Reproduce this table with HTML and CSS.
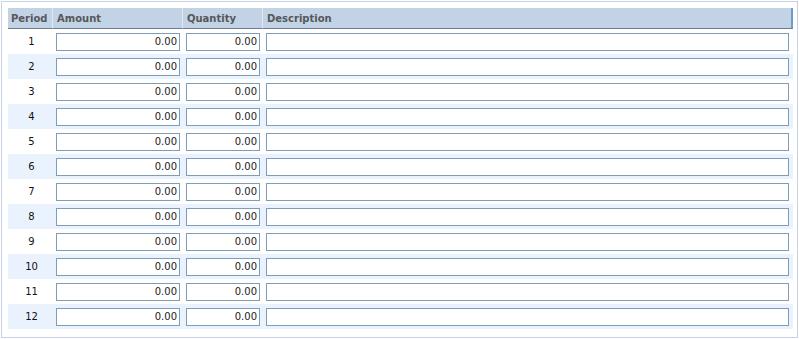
FILE: index.html
```html
<!DOCTYPE html>
<html>
<head>
<meta charset="utf-8">
<link rel="stylesheet" href="styles.css">
</head>
<body>
<div class="panel">
<table class="grid">
<colgroup><col class="c-period"><col class="c-amount"><col class="c-qty"><col></colgroup>
<thead>
<tr><th class="h-period">Period</th><th>Amount</th><th>Quantity</th><th class="h-last">Description</th></tr>
</thead>
<tbody>
<tr><td class="num">1</td><td><input class="in right" value="0.00"></td><td><input class="in right" value="0.00"></td><td><input class="in"></td></tr>
<tr class="alt"><td class="num">2</td><td><input class="in right" value="0.00"></td><td><input class="in right" value="0.00"></td><td><input class="in"></td></tr>
<tr><td class="num">3</td><td><input class="in right" value="0.00"></td><td><input class="in right" value="0.00"></td><td><input class="in"></td></tr>
<tr class="alt"><td class="num">4</td><td><input class="in right" value="0.00"></td><td><input class="in right" value="0.00"></td><td><input class="in"></td></tr>
<tr><td class="num">5</td><td><input class="in right" value="0.00"></td><td><input class="in right" value="0.00"></td><td><input class="in"></td></tr>
<tr class="alt"><td class="num">6</td><td><input class="in right" value="0.00"></td><td><input class="in right" value="0.00"></td><td><input class="in"></td></tr>
<tr><td class="num">7</td><td><input class="in right" value="0.00"></td><td><input class="in right" value="0.00"></td><td><input class="in"></td></tr>
<tr class="alt"><td class="num">8</td><td><input class="in right" value="0.00"></td><td><input class="in right" value="0.00"></td><td><input class="in"></td></tr>
<tr><td class="num">9</td><td><input class="in right" value="0.00"></td><td><input class="in right" value="0.00"></td><td><input class="in"></td></tr>
<tr class="alt"><td class="num">10</td><td><input class="in right" value="0.00"></td><td><input class="in right" value="0.00"></td><td><input class="in"></td></tr>
<tr><td class="num">11</td><td><input class="in right" value="0.00"></td><td><input class="in right" value="0.00"></td><td><input class="in"></td></tr>
<tr class="alt"><td class="num">12</td><td><input class="in right" value="0.00"></td><td><input class="in right" value="0.00"></td><td><input class="in"></td></tr>
</tbody>
</table>
</div>
</body>
</html>
```
FILE: styles.css
```css
html, body {
  margin: 0;
  padding: 0;
  background: #ffffff;
}
body {
  font-family: "DejaVu Sans", Verdana, sans-serif;
  font-size: 10px;
}
.panel {
  margin: 1px;
  width: 797px;
  height: 337px;
  box-sizing: border-box;
  border: 1px solid #c6d3e3;
  padding: 6px 4px 7px 6px;
}
.grid {
  border-collapse: separate;
  border-spacing: 0;
  width: 785px;
  table-layout: fixed;
}
.c-period { width: 45px; }
.c-amount { width: 130px; }
.c-qty { width: 80px; }
.grid th {
  height: 21px;
  padding: 0 0 0 4px;
  box-sizing: border-box;
  background: #c2d3e5;
  color: #55585c;
  font-weight: bold;
  font-size: 10px;
  text-align: left;
  border-bottom: 1px solid #6f7c8c;
  border-right: 1px solid #dfe8f2;
  vertical-align: middle;
  white-space: nowrap;
}
.grid th.h-period { padding-left: 3px; }
.grid th.h-last { border-right: 2px solid #6d9bd4; }
.grid td {
  height: 25px;
  padding: 0 3px;
  box-sizing: border-box;
  vertical-align: middle;
}
.grid td.num {
  text-align: center;
  color: #111;
  padding: 0 0 0 2px;
}
.grid tr.alt td { background: #eaf3fd; }
.grid td:last-child { padding-right: 4px; }
.in {
  display: block;
  width: 100%;
  height: 18px;
  box-sizing: border-box;
  margin: 0;
  border: 1px solid #7f9db9;
  background: #fff;
  font-family: "DejaVu Sans", Verdana, sans-serif;
  font-size: 10px;
  color: #222;
  padding: 0 2px;
  outline: none;
}
.in.right { text-align: right; }
```
